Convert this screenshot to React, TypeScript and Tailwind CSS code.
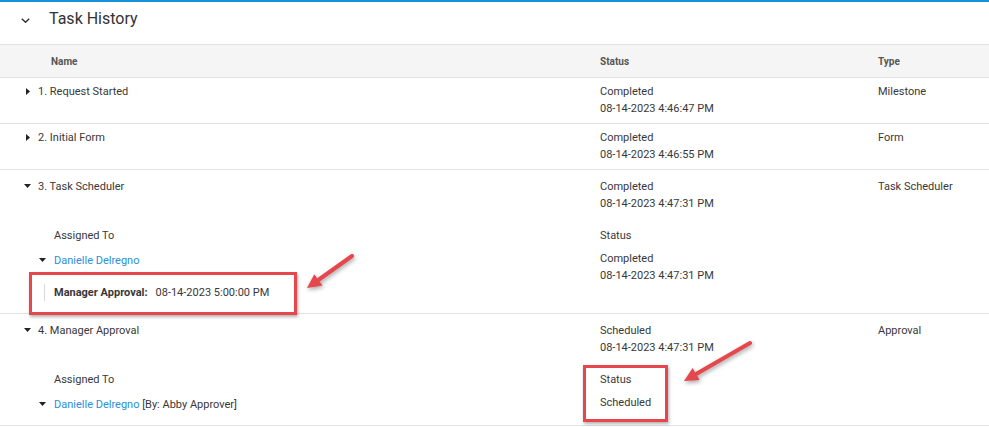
import React from 'react';

const CaretDown = () => (
  <svg width="7" height="4" viewBox="0 0 7 4" className="block">
    <polygon points="0,0 7,0 3.5,4" fill="#222" />
  </svg>
);

const CaretRight = () => (
  <svg width="7" height="7" viewBox="0 0 7 7" className="block">
    <polygon points="2,0 6,3.5 2,7" fill="#222" />
  </svg>
);

interface Task {
  name: string;
  status: string;
  date: string;
  type: string;
  open: boolean;
}

const tasks: Task[] = [
  { name: '1. Request Started', status: 'Completed', date: '08-14-2023 4:46:47 PM', type: 'Milestone', open: false },
  { name: '2. Initial Form', status: 'Completed', date: '08-14-2023 4:46:55 PM', type: 'Form', open: false },
  { name: '3. Task Scheduler', status: 'Completed', date: '08-14-2023 4:47:31 PM', type: 'Task Scheduler', open: true },
  { name: '4. Manager Approval', status: 'Scheduled', date: '08-14-2023 4:47:31 PM', type: 'Approval', open: true },
];

function MainLine({ t }: { t: Task }) {
  return (
    <div className="grid grid-cols-[600px_278px_1fr]">
      <div className="flex items-center gap-[7px] pl-[24px] h-[17px]">
        <span className="w-[7px] flex justify-center">{t.open ? <CaretDown /> : <CaretRight />}</span>
        <span>{t.name}</span>
      </div>
      <div>
        <div>{t.status}</div>
        <div>{t.date}</div>
      </div>
      <div>{t.type}</div>
    </div>
  );
}

export default function App() {
  return (
    <div
      className="relative min-h-screen bg-white border-t-2 border-[#1592d8] text-[11px] leading-[17px] text-[#383838]"
      style={{ fontFamily: 'Roboto, "Liberation Sans", sans-serif' }}
    >
      {/* Section title */}
      <div className="h-[42px] flex items-start pt-[7px] pl-[21px]">
        <svg width="9" height="5" viewBox="0 0 9 5" className="block mt-[9px]">
          <polyline points="0.8,0.8 4.5,4.2 8.2,0.8" fill="none" stroke="#333" strokeWidth="1.5" />
        </svg>
        <h2 className="ml-[19px] text-[16px] leading-[20px] text-[#333]">Task History</h2>
      </div>

      {/* Table header */}
      <div className="grid grid-cols-[600px_278px_1fr] h-[34px] items-center bg-[#f5f5f5] border-y border-[#e2e2e2] text-[10px] font-bold text-[#555]">
        <div className="pl-[51px]">Name</div>
        <div>Status</div>
        <div>Type</div>
      </div>

      {/* Rows */}
      {tasks.map((t, i) => (
        <div
          key={t.name}
          className={
            t.open
              ? 'border-b border-[#e2e2e2] pt-[7.5px] pb-[12.5px]'
              : 'border-b border-[#e2e2e2] pt-[4.5px] pb-[6.5px]'
          }
        >
          <MainLine t={t} />
          {t.open && (
            <div className="mt-[15px]">
              <div className="grid grid-cols-[600px_1fr]">
                <div className="pl-[54px]">Assigned To</div>
                <div>Status</div>
              </div>
              <div className="grid grid-cols-[600px_1fr] mt-[6px]">
                <div className="pl-[39px] pt-[2px]">
                  <div className="flex items-center gap-[8px]">
                    <span className="w-[7px] flex justify-center"><CaretDown /></span>
                    <span>
                      <span className="text-[#2b8fd6]">Danielle Delregno</span>
                      {i === 3 && <span> [By: Abby Approver]</span>}
                    </span>
                  </div>
                  {i === 2 && (
                    <div className="mt-[15px] ml-[5px] border-l border-[#d8d8d8] pl-[9px]">
                      <span className="font-bold">Manager Approval:</span>
                      <span className="ml-[8px]">08-14-2023 5:00:00 PM</span>
                    </div>
                  )}
                </div>
                <div>
                  <div>{i === 2 ? 'Completed' : 'Scheduled'}</div>
                  {i === 2 && <div>08-14-2023 4:47:31 PM</div>}
                </div>
              </div>
            </div>
          )}
        </div>
      ))}

      {/* Annotation overlays */}
      <div className="absolute left-[29px] top-[270px] w-[268px] h-[43px] border-[3px] border-[#e5474c] shadow-[1px_2px_3px_rgba(0,0,0,0.3)] pointer-events-none" />
      <div className="absolute left-[583px] top-[363px] w-[85px] h-[57px] border-[3px] border-[#e5474c] shadow-[1px_2px_3px_rgba(0,0,0,0.3)] pointer-events-none" />
      <svg
        className="absolute left-0 top-0 pointer-events-none drop-shadow-[1px_2px_2px_rgba(0,0,0,0.35)]"
        width="989"
        height="427"
        viewBox="0 0 989 427"
      >
        <line x1="352" y1="254" x2="319" y2="277.5" stroke="#e5474c" strokeWidth="4" strokeLinecap="round" />
        <polygon points="307,286 322.5,283.6 314.3,272.2" fill="#e5474c" />
        <line x1="750" y1="341" x2="697" y2="371.5" stroke="#e5474c" strokeWidth="4" strokeLinecap="round" />
        <polygon points="684,379 699.6,378.1 692.6,366" fill="#e5474c" />
      </svg>
    </div>
  );
}
